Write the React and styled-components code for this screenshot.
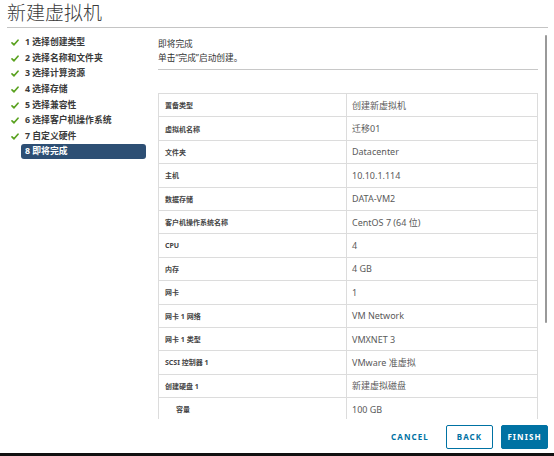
import React from "react";
import styled, { createGlobalStyle } from "styled-components";

// New VM wizard => last step "ready to complete"

const steps = [
  "1 选择创建类型",
  "2 选择名称和文件夹",
  "3 选择计算资源",
  "4 选择存储",
  "5 选择兼容性",
  "6 选择客户机操作系统",
  "7 自定义硬件",
  "8 即将完成",
];

const rows = [
  ["置备类型", "创建新虚拟机"],
  ["虚拟机名称", "迁移01"],
  ["文件夹", "Datacenter"],
  ["主机", "10.10.1.114"],
  ["数据存储", "DATA-VM2"],
  ["客户机操作系统名称", "CentOS 7 (64 位)"],
  ["CPU", "4"],
  ["内存", "4 GB"],
  ["网卡", "1"],
  ["网卡 1 网络", "VM Network"],
  ["网卡 1 类型", "VMXNET 3"],
  ["SCSI 控制器 1", "VMware 准虚拟"],
  ["创建硬盘 1", "新建虚拟磁盘"],
  ["容量", "100 GB", true],
];

function Check() {
  return (
    <svg width="8" height="7" viewBox="0 0 8 7">
      <path
        d="M1 3.8 L3 5.8 L7 1.2"
        fill="none"
        stroke="#5aa220"
        strokeWidth="1.7"
        strokeLinecap="round"
        strokeLinejoin="round"
      />
    </svg>
  );
}

function App() {
  return (
    <>
      <GlobalStyle />
      <Wizard>
        <Header>
          <Title>新建虚拟机</Title>
        </Header>
        <Body>
          <StepList>
            {steps.map((s, i) => (
              <Step key={s}>
                <IconSlot>{i < steps.length - 1 && <Check />}</IconSlot>
                <StepLabel $active={i === steps.length - 1}>{s}</StepLabel>
              </Step>
            ))}
          </StepList>
          <PanelFrame>
            <Panel>
              <Intro>
                <IntroLine>即将完成</IntroLine>
                <IntroLine>单击“完成”启动创建。</IntroLine>
              </Intro>
              <Summary>
                {rows.map(([k, v, sub], i) => (
                  <Row key={i}>
                    <KeyCell $sub={sub}>{k}</KeyCell>
                    <ValueCell>{v}</ValueCell>
                  </Row>
                ))}
              </Summary>
            </Panel>
            <ScrollThumb />
          </PanelFrame>
        </Body>
        <Footer>
          <FlatButton>CANCEL</FlatButton>
          <OutlineButton>BACK</OutlineButton>
          <SolidButton>FINISH</SolidButton>
        </Footer>
        <BottomEdge />
      </Wizard>
    </>
  );
}

export default App;

const GlobalStyle = createGlobalStyle`
  html, body {
    margin: 0;
    padding: 0;
    background: #fff;
  }
  body {
    font-family: "Noto Sans", "Noto Sans CJK SC", sans-serif;
    overflow: hidden;
  }
  * {
    box-sizing: border-box;
  }
`;

const Wizard = styled.div`
  width: 554px;
  height: 456px;
  display: flex;
  flex-direction: column;
  background: #fff;
`;

const Header = styled.div`
  height: 28px;
  margin: 0 6px 0 7px;
  border-bottom: 1px solid #c4c4c4;
  display: flex;
  align-items: flex-end;
`;

const Title = styled.h1`
  margin: 0 0 2px 0;
  font-size: 19px;
  line-height: 23px;
  font-weight: 300;
  color: #3a3a3a;
`;

const Body = styled.div`
  height: 392px;
  display: flex;
`;

const StepList = styled.ul`
  list-style: none;
  margin: 0;
  padding: 7px 4px 0 8px;
  width: 150px;
  flex-shrink: 0;
`;

const Step = styled.li`
  display: flex;
  align-items: center;
  height: 15.6px;
`;

const IconSlot = styled.span`
  width: 13px;
  flex-shrink: 0;
  display: flex;
  align-items: center;
  padding-left: 3px;
`;

const StepLabel = styled.span`
  flex: 1;
  height: 15px;
  line-height: 15px;
  padding-left: 4px;
  border-radius: 3px;
  font-size: 8.8px;
  font-weight: 700;
  color: ${(p) => (p.$active ? "#fff" : "#3a3a3a")};
  background: ${(p) => (p.$active ? "#2d4f74" : "transparent")};
`;

const PanelFrame = styled.div`
  position: relative;
  margin: 5px 6px 0 0;
  height: 386px;
  width: 398px;
  flex-shrink: 0;
`;

const Panel = styled.div`
  height: 100%;
  overflow: hidden;
  padding: 5px 10px 0 8px;
`;

const ScrollThumb = styled.div`
  position: absolute;
  top: 2px;
  right: 1px;
  width: 2.5px;
  height: 288px;
  border-radius: 1px;
  background: #999;
`;

const Intro = styled.div`
  width: 380px;
  border-bottom: 1px solid #c8c8c8;
  padding-bottom: 4px;
`;

const IntroLine = styled.div`
  font-size: 8.7px;
  line-height: 13.5px;
  color: #333;
`;

const Summary = styled.div`
  margin-top: 23px;
  width: 380px;
  border: 1px solid #dcdcdc;
  border-bottom: none;
`;

const Row = styled.div`
  display: grid;
  grid-template-columns: 188px 1fr;
  height: 23.4px;
  border-bottom: 1px solid #dcdcdc;
`;

const KeyCell = styled.div`
  display: flex;
  align-items: center;
  padding-left: ${(p) => (p.$sub ? "17px" : "6px")};
  border-right: 1px solid #dcdcdc;
  font-size: 7px;
  font-weight: 700;
  color: #444;
  white-space: nowrap;
`;

const ValueCell = styled.div`
  display: flex;
  align-items: center;
  padding-left: 5px;
  font-size: 9px;
  color: #5a5a5a;
  white-space: nowrap;
`;

const Footer = styled.div`
  height: 33px;
  display: flex;
  align-items: center;
  justify-content: flex-end;
  gap: 8px;
  padding-right: 6px;
`;

const BaseButton = styled.button`
  height: 24px;
  padding: 0;
  border-radius: 2px;
  font-family: "Noto Sans", sans-serif;
  font-size: 8px;
  font-weight: 700;
  letter-spacing: 1.1px;
  cursor: pointer;
`;

const FlatButton = styled(BaseButton)`
  width: 56px;
  border: none;
  background: transparent;
  color: #0072a3;
`;

const OutlineButton = styled(BaseButton)`
  width: 47px;
  border: 1px solid #0072a3;
  background: #fff;
  color: #0072a3;
`;

const SolidButton = styled(BaseButton)`
  width: 47px;
  border: 1px solid #0072a3;
  background: #0072a3;
  color: #fff;
`;

const BottomEdge = styled.div`
  height: 3px;
  background: #111;
`;
